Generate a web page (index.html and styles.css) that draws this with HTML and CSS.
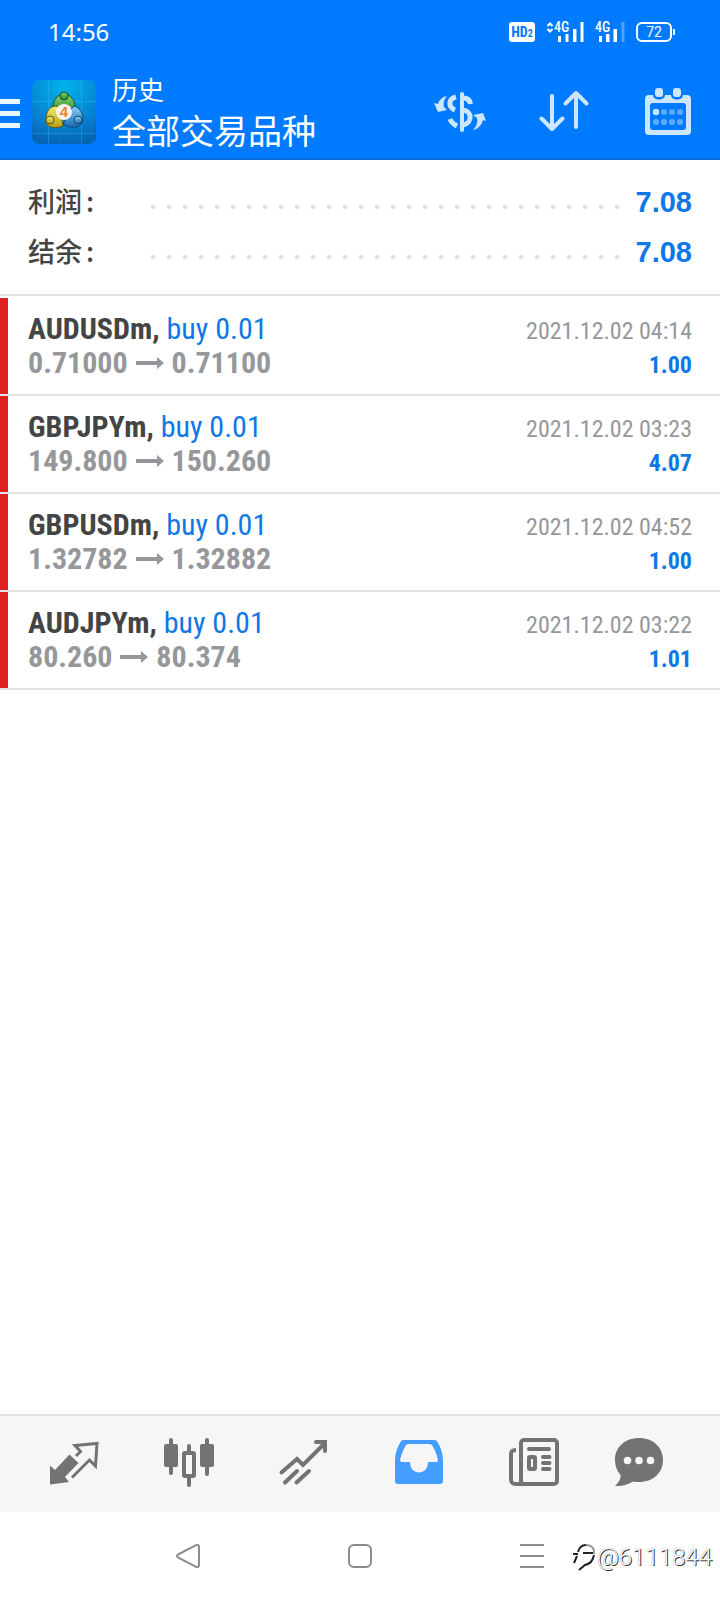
FILE: index.html
```html
<!DOCTYPE html>
<html lang="zh-CN">
<head>
<meta charset="utf-8">
<meta name="viewport" content="width=device-width, initial-scale=1">
<title>历史</title>
<link rel="stylesheet" href="styles.css">
</head>
<body>
<div class="app">
  <div class="top">
    <div class="status">
      <time class="clock">14:56</time>
      <div class="status-icons">
        <span class="hd">HD<small>2</small></span>
        <svg class="signal" width="38" height="26" viewBox="0 -3 38 26" role="img" aria-label="4G">
          <path d="M1.500 4L4 1.500 6.500 4M1.500 7L4 9.500 6.500 7" class="line"/>
          <text x="8" y="10" class="net">4G</text>
          <path d="M12 14h3v6h-3zM19.500 12h3v8h-3zM27 7h3.500v13h-3.500zM34.500 0h3v20h-3z"/>
        </svg>
        <svg class="signal" width="30" height="26" viewBox="0 -3 30 26" role="img" aria-label="4G">
          <text x="0" y="10" class="net">4G</text>
          <path d="M4 14h3v6h-3zM11 12h3.500v8h-3.500zM18.500 7h3.500v13h-3.500z"/>
          <path d="M26.500 0h3v20h-3z" opacity=".3"/>
        </svg>
        <span class="battery">72</span>
      </div>
    </div>
    <header class="bar">
      <button class="menu" aria-label="菜单"><i></i><i></i><i></i></button>
      <svg class="logo" width="64" height="64" viewBox="0 0 64 64" aria-hidden="true">
        <defs>
          <radialGradient id="sky" cx=".5" cy=".1" r=".9"><stop offset="0" stop-color="#00b4ea"/><stop offset=".6" stop-color="#0587d6"/><stop offset="1" stop-color="#0566b4"/></radialGradient>
          <linearGradient id="green" x2="0" y2="1"><stop stop-color="#8fd06a"/><stop offset="1" stop-color="#1f8a35"/></linearGradient>
          <linearGradient id="gold" x2="0" y2="1"><stop stop-color="#f3ec6a"/><stop offset="1" stop-color="#b99c18"/></linearGradient>
          <linearGradient id="blue" x2="0" y2="1"><stop stop-color="#8fd3f5"/><stop offset="1" stop-color="#1669b4"/></linearGradient>
        </defs>
        <rect width="64" height="64" rx="7" fill="url(#sky)"/>
        <path d="M16.500 0v64M49.500 0v64M0 21.500h64M0 53.500h64" stroke="#5fd0ff" stroke-opacity=".25" fill="none"/>
        <path d="M5.500 0v64M27.500 0v64M38.500 0v64M60.500 0v64M0 10.500h64M0 32.500h64M0 43.500h64" stroke="#5fd0ff" stroke-opacity=".06" fill="none"/>
        <path d="M21 30c-1-10 5-16 11-16s12 6 11 16l-3 4H25z" fill="url(#green)" stroke="#14532a"/>
        <path d="M24 26C16 26 13 35 14 43c3 6 12 5 17 3l-3-18z" fill="url(#gold)" stroke="#5d5a1a"/>
        <path d="M42 26c7 2 11 10 8 17-4 6-13 5-19 1l9-16z" fill="url(#blue)" stroke="#0d4677"/>
        <circle cx="32" cy="16" r="4" fill="url(#green)" stroke="#14532a"/>
        <circle cx="18" cy="40" r="4" fill="url(#gold)" stroke="#5d5a1a"/>
        <circle cx="46" cy="40" r="4" fill="url(#blue)" stroke="#0d4677"/>
        <circle cx="32" cy="32" r="8" fill="#f6f3ee"/>
        <text x="32" y="37" class="four">4</text>
      </svg>
      <div class="titles">
        <div class="kicker">历史</div>
        <h1 class="title">全部交易品种</h1>
      </div>
      <div class="actions">
        <button class="act" aria-label="交易品种">
          <svg width="54" height="48" viewBox="0 3 54 48">
            <path d="M29 10v36" class="tool"/>
            <path d="M23 13c-8 2-8 10-1 13M17 35c1 3 3 5 7 7M30 14c4 0 7 2 7.500 6M30 26c9 1 10 13 0 15" class="tool butt"/>
            <path d="M14 12C9 13 6 16 5 20L1 19l4 9 9-2-3-3c-1-4 0-8 3-11zM40 46c5-1 9-5 10-10l3 1-3-8-10 2 4 3c1 5-1 9-4 12z" class="tool-fill"/>
          </svg>
        </button>
        <button class="act" aria-label="排序">
          <svg width="54" height="48" viewBox="0 0 54 48">
            <path d="M13 9v33M2.500 31.500L13 42l10.500-10.500M37 40V6M26.500 16.500L37 6l10.500 10.500" class="tool"/>
          </svg>
        </button>
        <button class="act" aria-label="日期">
          <svg width="46" height="48" viewBox="0 0 46 48">
            <path d="M4 8h4c0 6 12 6 12 0h6c0 6 12 6 12 0h4a4 4 0 0 1 4 4v32a4 4 0 0 1-4 4H4a4 4 0 0 1-4-4V12a4 4 0 0 1 4-4zM8 16a3 3 0 0 0-3 3v21a3 3 0 0 0 3 3h30a3 3 0 0 0 3-3V19a3 3 0 0 0-3-3z" class="tool-fill" fill-rule="evenodd"/>
            <rect x="10" y="1" width="8" height="9" rx="3" class="tool-fill"/><rect x="28" y="1" width="8" height="9" rx="3" class="tool-fill"/>
            <circle cx="11" cy="25" r="3.200" class="tool-fill"/>
            <g fill="#5cabff"><circle cx="19" cy="25" r="3"/><circle cx="27" cy="25" r="3"/><circle cx="35" cy="25" r="3"/><circle cx="11" cy="35" r="3"/><circle cx="19" cy="35" r="3"/><circle cx="27" cy="35" r="3"/><circle cx="35" cy="35" r="3"/></g>
          </svg>
        </button>
      </div>
    </header>
  </div>

  <main class="content">
    <dl class="summary">
      <div class="sum"><dt>利润<span class="colon">:</span></dt><dd>7.08</dd></div>
      <div class="sum"><dt>结余<span class="colon">:</span></dt><dd>7.08</dd></div>
    </dl>
    <ul class="deals">
      <li class="deal">
        <div class="info"><div class="name"><b>AUDUSDm,</b> <span class="side">buy 0.01</span></div>
        <div class="price">0.71000 <svg class="arrow" viewBox="0 0 28 12"><path d="M0 4h21V0l7 6-7 6V8H0z"/></svg> 0.71100</div></div>
        <div class="result"><time class="date">2021.12.02 04:14</time><b class="profit">1.00</b></div>
      </li>
      <li class="deal">
        <div class="info"><div class="name"><b>GBPJPYm,</b> <span class="side">buy 0.01</span></div>
        <div class="price">149.800 <svg class="arrow" viewBox="0 0 28 12"><path d="M0 4h21V0l7 6-7 6V8H0z"/></svg> 150.260</div></div>
        <div class="result"><time class="date">2021.12.02 03:23</time><b class="profit">4.07</b></div>
      </li>
      <li class="deal">
        <div class="info"><div class="name"><b>GBPUSDm,</b> <span class="side">buy 0.01</span></div>
        <div class="price">1.32782 <svg class="arrow" viewBox="0 0 28 12"><path d="M0 4h21V0l7 6-7 6V8H0z"/></svg> 1.32882</div></div>
        <div class="result"><time class="date">2021.12.02 04:52</time><b class="profit">1.00</b></div>
      </li>
      <li class="deal">
        <div class="info"><div class="name"><b>AUDJPYm,</b> <span class="side">buy 0.01</span></div>
        <div class="price">80.260 <svg class="arrow" viewBox="0 0 28 12"><path d="M0 4h21V0l7 6-7 6V8H0z"/></svg> 80.374</div></div>
        <div class="result"><time class="date">2021.12.02 03:22</time><b class="profit">1.01</b></div>
      </li>
    </ul>
  </main>

  <nav class="tabs">
    <button class="tab" aria-label="行情"><svg width="52" height="50" viewBox="0 0 52 50">
      <path d="M2 27.500l5 4.500L21.500 16.500l9 8.500L17 39l4 5-19 2.500z"/>
      <path d="M28 18l4.500-4.500-5.500-6L49 5.500 47.500 28l-6-6L24 39.500" class="edge"/></svg></button>
    <button class="tab" aria-label="图表"><svg width="52" height="50" viewBox="0 0 52 50">
      <rect x="1" y="6" width="14" height="23" rx="2"/><rect x="37" y="6" width="14" height="23" rx="2"/>
      <path d="M6 2a2 2 0 0 1 4 0v33a2 2 0 0 1-4 0zM42 2a2 2 0 0 1 4 0v34a2 2 0 0 1-4 0zM24 8a2 2 0 0 1 4 0v6h-4zM24 38h4v9a2 2 0 0 1-4 0z"/>
      <rect x="21" y="15" width="10" height="23" rx="1" class="edge thick"/></svg></button>
    <button class="tab" aria-label="交易"><svg width="52" height="50" viewBox="0 0 52 50">
      <path d="M3.500 34.500L19 21l6 6L46 6M38 4h9v9M7 44.500L19 33M18.500 44.500L31 33" class="edge thick round"/></svg></button>
    <button class="tab active" aria-label="历史"><svg width="52" height="50" viewBox="0 0 52 50">
      <path fill-rule="evenodd" d="M11 2h30a4 4 0 0 1 4 3c4 7 5 12 5 20v18a3 3 0 0 1-3 3H5a3 3 0 0 1-3-3V25c0-8 1-13 5-20a4 4 0 0 1 4-3zM16 6a4 4 0 0 0-4 3C9 14 8 18 7 22a2 2 0 0 0 2 2h8c0 14 18 14 18 0h8a2 2 0 0 0 2-2c-1-4-2-8-5-13a4 4 0 0 0-4-3z"/></svg></button>
    <button class="tab" aria-label="新闻"><svg width="52" height="50" viewBox="0 0 52 50">
      <rect x="13" y="2" width="36" height="44" rx="3" class="edge thick"/>
      <path d="M8 12c-4 0-5 1-5 4v25c0 4 1 5 5 5h8" class="edge thick"/>
      <path d="M21 11h20M35 19h6.500M35 25h6.500M35 31h6.500" class="edge thick round"/><rect x="21" y="19" width="6" height="12" rx="1" class="edge thick"/></svg></button>
    <button class="tab" aria-label="消息"><svg width="52" height="50" viewBox="0 0 52 50">
      <path fill-rule="evenodd" d="M26 0c14 0 24 9 24 22s-10 22-24 22c-2 0-4 0-6-.500C14 47 8 48.500 2 48c4-4 6-7 5.500-11C4 33 2 28 2 22 2 9 12 0 26 0zM14.500 18.700a3.800 3.800 0 1 0 0 7.600 3.800 3.800 0 0 0 0-7.600zM26 18.700a3.800 3.800 0 1 0 0 7.600 3.800 3.800 0 0 0 0-7.600zM37.500 18.700a3.800 3.800 0 1 0 0 7.600 3.800 3.800 0 0 0 0-7.600z"/></svg></button>
  </nav>

  <div class="system">
    <button class="sys" aria-label="返回"><svg width="24" height="24" viewBox="0 0 24 24"><path d="M2 10.500L20 1.200q3-1 3 2v17.600q0 3-3 2L2 13.500q-2-1.500 0-3z"/></svg></button>
    <button class="sys" aria-label="主页"><svg width="24" height="24" viewBox="0 0 24 24"><rect x="1" y="1" width="22" height="22" rx="5"/></svg></button>
    <button class="sys" aria-label="最近"><svg width="24" height="24" viewBox="0 0 24 24"><path d="M0 1h24M0 12h24M0 23h24"/></svg></button>
    <div class="mark">
      <svg width="24" height="28" viewBox="0 0 24 28"><path d="M0 11h5M5 9c1-4 4-7 8-7M4 13L1 20M10 10h10"/><path d="M13 2c6 0 9 4 8 9" class="faint"/><path d="M21 12c-1 6-4 9-9 10l-6 5"/></svg><span>@6111844</span>
    </div>
  </div>
</div>
</body>
</html>
```
FILE: styles.css
```css
* { box-sizing: border-box; }
body {
  margin: 0;
  background: #fff;
  color: #444;
  font-family: "Roboto Condensed", "Liberation Sans Narrow", Roboto, "Noto Sans CJK SC", sans-serif;
}
button { border: 0; padding: 0; margin: 0; background: none; color: inherit; font: inherit; display: flex; align-items: center; justify-content: center; }
svg { display: block; }
dl, dd, ul, h1 { margin: 0; padding: 0; }

.app { min-height: 100vh; display: flex; flex-direction: column; }

.top { background: #007aff; color: #fff; border-bottom: 2px solid #0a6cdb; }
.status { height: 64px; padding: 0 48px; display: flex; align-items: center; justify-content: space-between; }
.clock { font: 24px/32px "Noto Sans", sans-serif; }
.status-icons { display: flex; align-items: center; gap: 11px; }
.hd { height: 20px; width: 26px; border-radius: 3px; background: #fff; color: #007aff; font: bold 14px/20px "Roboto Condensed", Roboto, sans-serif; text-align: center; }
.hd small { font-size: 10px; }
.signal { fill: #fff; }
.signal .line { fill: none; stroke: #fff; stroke-width: 2; }
.net { font: 500 14px "Roboto Condensed", Roboto, sans-serif; }
.battery { position: relative; width: 36px; height: 20px; border: 2px solid #fff; border-radius: 6px; font: 14px/16px Roboto, sans-serif; text-align: center; }
.battery::after { content: ""; position: absolute; right: -5px; top: 5px; width: 2px; height: 6px; background: #fff; }

.bar { height: 94px; padding-right: 29px; display: flex; align-items: center; }
.menu { width: 20px; padding-top: 4px; flex-direction: column; gap: 7px; }
.menu i { width: 20px; height: 5px; background: #e6f7ff; }
.logo { margin-left: 12px; margin-top: 2px; }
.four { font: bold 15px "Liberation Sans", sans-serif; fill: #f08030; text-anchor: middle; }
.titles { margin-left: 16px; font-family: "Noto Sans CJK SC", sans-serif; }
.kicker { font-size: 26px; line-height: 38px; }
.title { font-size: 34px; line-height: 44px; font-weight: 400; }
.actions { margin-left: auto; display: flex; align-items: center; gap: 52px; }
.tool { fill: none; stroke: #cce6ff; stroke-width: 4; stroke-linecap: round; stroke-linejoin: round; }
.butt { stroke-width: 5; stroke-linecap: butt; }
.tool-fill { fill: #cce6ff; }

.content { flex: 1; }
.summary { padding: 17px 28px; border-bottom: 2px solid #e4e4e4; }
.sum { height: 50px; display: flex; align-items: center; }
.sum dt { width: 117px; font: 500 27px/48px "Noto Sans CJK SC", sans-serif; padding-bottom: 2px; }
.colon { margin-left: 4px; }
.sum dd { flex: 1; display: flex; align-items: center; justify-content: flex-end; color: #0f78e6; font: bold 29px/50px "Liberation Sans", sans-serif; }
.sum dd::before { content: ""; flex: 1; height: 20px; margin-right: 11px; background: radial-gradient(circle at 8px 8px, #e4e4e4 2px, transparent 3px) 0 7px / 16px 16px repeat-x; }

.deals { list-style: none; padding-top: 2px; }
.deal { position: relative; height: 98px; padding: 14px 28px 0; border-bottom: 2px solid #e4e4e4; display: flex; justify-content: space-between; }
.deal::before { content: ""; position: absolute; left: 0; top: 0; bottom: 0; width: 8px; background: #e01f1f; }
.name, .price { font-size: 30px; line-height: 34px; }
.side { color: #0f78e6; }
.price { color: #96979b; font-weight: 700; }
.arrow { display: inline-block; width: 28px; height: 12px; margin: 0 1px; vertical-align: 4px; fill: #96979b; }
.result { padding-top: 2px; text-align: right; }
.date, .profit { display: block; line-height: 34px; font-size: 24px; }
.date { color: #96979b; }
.profit { color: #0f78e6; }

.tabs { height: 98px; padding: 0 33px 2px 16px; border-top: 2px solid #e4e4e4; background: #f6f6f6; display: grid; grid-template-columns: repeat(5, 115fr) 96fr; color: #737373; }
.tab svg { fill: currentColor; }
.tab .edge { fill: none; stroke: currentColor; stroke-width: 3; }
.tab .thick { stroke-width: 4; }
.tab .round { stroke-linecap: round; }
.active { color: #449dff; }

.system { position: relative; height: 88px; padding: 0 102px; display: grid; grid-template-columns: repeat(3, 1fr); }
.sys svg { fill: none; stroke: #8c8c8c; stroke-width: 2; }
.mark { position: absolute; right: 8px; top: 29px; display: flex; align-items: center; font: 300 24px/32px Roboto, sans-serif; color: #fff; text-shadow: 1px 1px 0 #333, 0 0 1px #777; }
.mark svg { fill: none; stroke: #222; stroke-width: 2; }
.mark .faint { stroke: #999; }
```
